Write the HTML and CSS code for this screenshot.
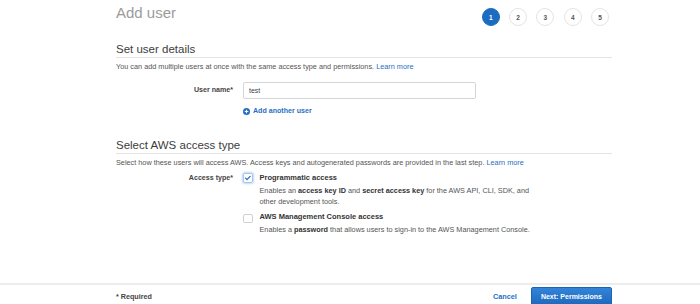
FILE: index.html
```html
<!DOCTYPE html>
<html lang="en">
<head>
  <meta charset="UTF-8"/>
  <title>Add user</title>
  <link rel="stylesheet" href="styles.css">
</head>
<body>

  <main class="page">
    <header class="wizard-head">
      <h1 class="title">Add user</h1>
      <ol class="steps">
        <li class="step active">1</li>
        <li class="step">2</li>
        <li class="step">3</li>
        <li class="step">4</li>
        <li class="step">5</li>
      </ol>
    </header>

    <!-- Set user details -->
    <section class="panel">
      <h2 class="panel-title">Set user details</h2>
      <p class="panel-desc">You can add multiple users at once with the same access type and permissions. <a href="#">Learn more</a></p>

      <div class="field">
        <label class="field-label">User name*</label>
        <div class="field-body">
          <input class="text-input" type="text" value="test">
          <a href="#" class="add-link">
            <svg class="plus-icon" viewBox="0 0 10 10" width="7" height="7">
              <circle cx="5" cy="5" r="5" fill="#1f6fc5"/>
              <path d="M5 2.4v5.2M2.4 5h5.2" stroke="#fff" stroke-width="1.6"/>
            </svg>
            Add another user
          </a>
        </div>
      </div>
    </section>

    <!-- Select AWS access type -->
    <section class="panel panel-access">
      <h2 class="panel-title">Select AWS access type</h2>
      <p class="panel-desc">Select how these users will access AWS. Access keys and autogenerated passwords are provided in the last step. <a href="#">Learn more</a></p>

      <div class="field field-top">
        <label class="field-label">Access type*</label>
        <div class="field-body options">
          <div class="option">
            <span class="checkbox checked">
              <svg viewBox="0 0 10 10" width="8" height="8">
                <path d="M2 5.2l2 2L8.2 2.8" fill="none" stroke="#1f6fc5" stroke-width="1.7" stroke-linecap="round" stroke-linejoin="round"/>
              </svg>
            </span>
            <div class="option-text">
              <div class="option-title">Programmatic access</div>
              <p class="option-desc">Enables an <b>access key ID</b> and <b>secret access key</b> for the AWS API, CLI, SDK, and other development tools.</p>
            </div>
          </div>
          <div class="option">
            <span class="checkbox"></span>
            <div class="option-text">
              <div class="option-title">AWS Management Console access</div>
              <p class="option-desc">Enables a <b>password</b> that allows users to sign-in to the AWS Management Console.</p>
            </div>
          </div>
        </div>
      </div>
    </section>
  </main>

  <footer class="wizard-foot">
    <div class="foot-inner">
      <span class="required">* Required</span>
      <div class="actions">
        <a href="#" class="cancel">Cancel</a>
        <button class="btn-primary">Next: Permissions</button>
      </div>
    </div>
  </footer>

</body>
</html>
```

FILE: styles.css
```css
/* Reset */
* { margin:0; padding:0; box-sizing:border-box; }
html, body {
  width:100%; height:100%; overflow:hidden;
  background:#fff; color:#444;
  font-family:'Liberation Sans', Arial, sans-serif;
}
body { display:flex; flex-direction:column; }
a { color:#1f6fc5; text-decoration:none; }
ol { list-style:none; }

/* Page column */
.page {
  flex:1;
  width:496px;
  margin-left:116px;
}

/* Header: title + steps */
.wizard-head {
  display:flex; justify-content:space-between; align-items:flex-start;
  padding-top:4px;
  height:42px;
}
.title {
  font-size:15px; line-height:18px; font-weight:400;
  color:#9b9b9b;
}
.steps {
  display:flex; gap:9.3px;
  margin-top:4px; margin-right:3px;
}
.step {
  width:18px; height:18px; border-radius:50%;
  border:1px solid #e4e4e4;
  display:flex; align-items:center; justify-content:center;
  font-size:6.5px; font-weight:700; color:#555;
}
.step.active {
  background:#1b6cc1; border-color:#1b6cc1; color:#fff;
}

/* Panels */
.panel-title {
  font-size:11.5px; line-height:14px; font-weight:400;
  color:#3d3d3d;
  padding-bottom:1px;
  border-bottom:1px solid #e3e3e3;
}
.panel-desc {
  margin-top:3.5px;
  font-size:7.3px; line-height:10px; color:#555;
}
.panel-access { margin-top:22px; }

/* Form rows */
.field {
  display:grid; grid-template-columns:117px 1fr; column-gap:10px;
  margin-top:10.5px;
}
.field-top { margin-top:5.4px; }
.field-label {
  text-align:right;
  font-size:7.1px; font-weight:700; color:#444;
  line-height:17px;
}
.field-top .field-label { line-height:10px; }

.text-input {
  display:block;
  width:233px; height:17px;
  border:1px solid #d5d5d5; border-radius:2px;
  padding:0 5px;
  font-family:inherit; font-size:7px; color:#444;
}
.add-link {
  display:flex; align-items:center; gap:3px;
  margin-top:7px;
  font-size:7.1px; font-weight:700; line-height:10px;
}

/* Access options */
.option { display:flex; gap:7px; }
.option + .option { margin-top:5px; }
.checkbox {
  flex:none;
  width:9.5px; height:9.5px; margin-top:0.5px;
  border:1px solid #d0d0d0; border-radius:2px;
  display:flex; align-items:center; justify-content:center;
}
.option + .option .checkbox { margin-top:2px; }
.checkbox.checked {
  border-color:#a9c6e8;
  box-shadow:0 0 2px 1px rgba(60,140,230,0.35);
}
.option-title {
  font-size:7.5px; font-weight:700; line-height:10px; color:#333;
}
.option-desc {
  max-width:285px; margin-top:2px;
  font-size:7.3px; line-height:11px; color:#555;
}
.option-desc b { color:#333; }

/* Footer */
.wizard-foot {
  height:21px;
  border-top:2px solid #ececec;
}
.foot-inner {
  width:496px; margin-left:116px;
  display:flex; justify-content:space-between; align-items:center;
  padding-top:2px;
}
.required { font-size:7.2px; font-weight:700; color:#444; }
.actions { display:flex; align-items:center; gap:14px; }
.cancel { font-size:7.3px; font-weight:700; }
.btn-primary {
  height:19px; padding:0 9px;
  border:1px solid #1a64b4; border-radius:2px;
  background:linear-gradient(#3384d8, #1d68bd);
  color:#fff; font-family:inherit; font-size:7px; font-weight:700;
}
```
